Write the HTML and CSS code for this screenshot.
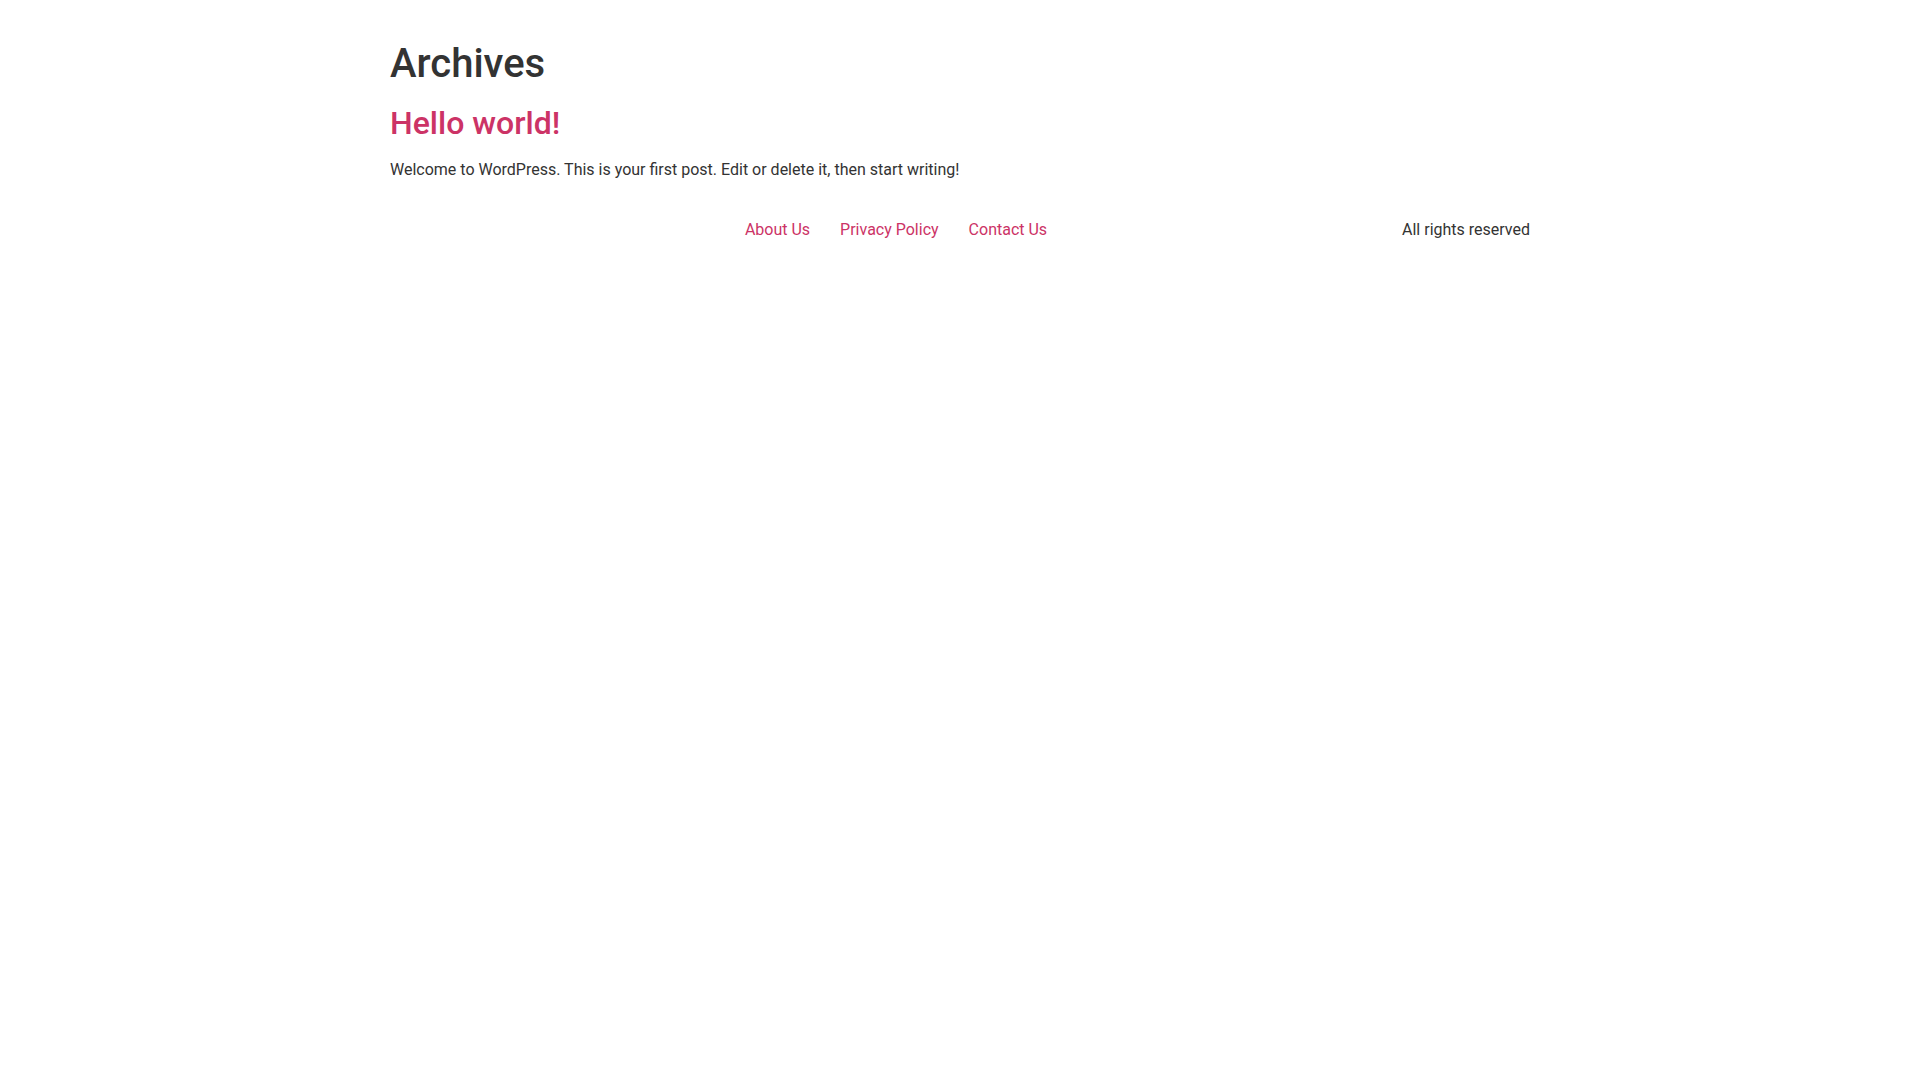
FILE: index.html
```html
<!DOCTYPE html>
<html lang="en">
<head>
<meta charset="utf-8">
<title>Archives</title>
<link rel="stylesheet" href="styles.css">
</head>
<body>
<main class="site-main">
  <header class="page-header">
    <h1 class="entry-title">Archives</h1>
  </header>
  <div class="page-content">
    <article class="post">
      <h2 class="entry-title"><a href="#">Hello world!</a></h2>
      <p>Welcome to WordPress. This is your first post. Edit or delete it, then start writing!</p>
    </article>
  </div>
</main>
<footer class="site-footer">
  <div class="footer-inner">
    <div class="site-branding"></div>
    <nav class="site-navigation">
      <ul class="menu">
        <li><a href="#">About Us</a></li>
        <li><a href="#">Privacy Policy</a></li>
        <li><a href="#">Contact Us</a></li>
      </ul>
    </nav>
    <div class="copyright"><p>All rights reserved</p></div>
  </div>
</footer>
</body>
</html>
```
FILE: styles.css
```css
html, body {
  margin: 0;
  background: #fff;
}
body {
  font-family: Roboto, "Liberation Sans", sans-serif;
  font-size: 16px;
  line-height: 1.5;
  color: #333;
}
a {
  color: #c36;
  text-decoration: none;
}
h1, h2 {
  font-weight: 500;
  line-height: 1.2;
  margin: 8px 0 16px;
}
h1 { font-size: 40px; }
h2 { font-size: 32px; }
p {
  margin: 0 0 14.4px;
}
.site-main {
  max-width: 1140px;
  margin: 0 auto;
  padding-top: 32px;
}
.site-footer {
  max-width: 1140px;
  margin: 0 auto;
}
.footer-inner {
  display: flex;
  justify-content: space-between;
  align-items: center;
  padding-top: 21px;
}
.menu {
  display: flex;
  list-style: none;
  margin: 0;
  padding: 0;
}
.menu li a {
  display: block;
  padding: 0 15px;
}
.copyright p {
  margin: 0;
}
```
